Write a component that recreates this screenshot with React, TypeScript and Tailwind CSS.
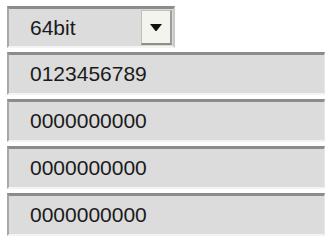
import React from 'react';

const rows = ['0123456789', '0000000000', '0000000000', '0000000000'];

const Field: React.FC<{ value: string }> = ({ value }) => (
  <div className="h-[43px] w-[318px] shrink-0 flex items-center bg-[#dcdcdc] border-t-[3px] border-l-2 border-b-2 border-r border-t-[#8c8c8c] border-l-[#a8a8a8] border-b-[#f4f4f0] border-r-[#e8e8e8] pl-[21px] text-[21px] text-[#1a1a1a]">
    {value}
  </div>
);

export default function App() {
  return (
    <div className="w-[329px] h-[237px] bg-white pt-[6px] pl-[7px] flex flex-col gap-[4px] font-['Liberation_Sans',Arial,sans-serif] overflow-hidden">
      <div className="h-[42px] w-[168px] shrink-0 flex items-center bg-[#dcdcdc] border-t-[3px] border-l-2 border-b-2 border-r-2 border-t-[#8c8c8c] border-l-[#a8a8a8] border-b-[#f4f4f0] border-r-[#c8c8c4]">
        <span className="pl-[21px] text-[21px] text-[#1a1a1a] flex-1">64bit</span>
        <div className="w-[31px] h-[35px] mr-[1px] flex items-center justify-center bg-[#f4f4ee] border border-[#c0c0b8] border-b-2 border-r-2 border-b-[#8c8c88] border-r-[#9c9c98]">
          <svg width="12" height="7" viewBox="0 0 12 7">
            <path d="M0 0 H12 L6.5 7 H5.5 Z" fill="#111" />
          </svg>
        </div>
      </div>
      {rows.map((r, i) => (
        <Field key={i} value={r} />
      ))}
    </div>
  );
}
